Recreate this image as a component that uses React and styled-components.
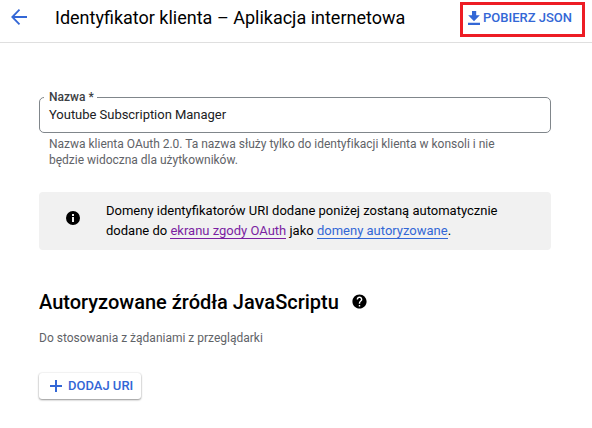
import React from "react";
import styled, { createGlobalStyle } from "styled-components";

const GlobalStyle = createGlobalStyle`
  * { box-sizing: border-box; }
  body {
    margin: 0;
    background: #fff;
    color: #000;
    font-family: Roboto, "Liberation Sans", sans-serif;
    overflow: hidden;
  }
`;

const Page = styled.div`
  width: 592px;
  height: 428px;
  overflow: hidden;
`;

const Header = styled.header`
  display: flex;
  align-items: flex-start;
  height: 43px;
  border-bottom: 1px solid #dfdfdf;
`;

const BackButton = styled.button`
  display: flex;
  margin: 7px 0 0 9px;
  padding: 0;
  border: 0;
  background: none;
  color: #3367d6;
`;

const Title = styled.h1`
  flex: none;
  width: 405px;
  margin: 7px 0 0 26px;
  font-size: 18px;
  font-weight: 400;
  line-height: 22px;
  white-space: nowrap;
`;

const DownloadButton = styled.button`
  display: flex;
  align-items: center;
  flex: none;
  width: 125px;
  height: 35px;
  margin: 2px 0 0;
  padding: 0 0 3px 3px;
  border: 3px solid #ed1c24;
  background: none;
  color: #3367d6;
  font: 500 13px/16px Roboto, sans-serif;
  white-space: nowrap;
`;

const Content = styled.main`
  display: flex;
  flex-direction: column;
  align-items: flex-start;
  width: 512px;
  margin: 48px 0 0 39px;
`;

const Field = styled.fieldset`
  width: 512px;
  height: 42px;
  margin: 0;
  padding: 0 9px;
  border: 1px solid #80868b;
  border-radius: 5px;
`;

const FieldLabel = styled.legend`
  height: 13px;
  margin-left: -5px;
  padding: 0 3px 0 5px;
  color: #3c4043;
  font-size: 12px;
  font-weight: 500;
  line-height: 13px;
`;

const FieldValue = styled.div`
  margin-top: 3px;
  color: #202124;
  font-size: 13px;
  line-height: 16px;
  letter-spacing: -0.03px;
  white-space: nowrap;
`;

const Hint = styled.p`
  margin: 3px 0 0 10px;
  color: #5f6368;
  font-size: 12px;
  line-height: 16px;
  letter-spacing: -0.01px;
  white-space: nowrap;
`;

const Notice = styled.aside`
  display: flex;
  align-items: center;
  width: 512px;
  height: 58px;
  margin-top: 24px;
  padding-left: 26px;
  border-radius: 4px;
  background: #f1f1f1;
`;

const NoticeIcon = styled.span`
  display: flex;
  width: 41px;
  margin-top: -6px;
`;

const NoticeText = styled.p`
  margin: 0;
  font-size: 13px;
  line-height: 20px;
  white-space: nowrap;
`;

const Link = styled.a`
  border-bottom: 1px solid;
  color: ${(p) => (p.$visited ? "#7b1fa2" : "#3367d6")};
  text-decoration: none;
`;

const SectionHeading = styled.div`
  display: flex;
  align-items: center;
  height: 26px;
  margin-top: 39px;
`;

const SectionTitle = styled.h2`
  width: 312px;
  margin: 0;
  font-size: 20px;
  font-weight: 500;
  line-height: 26px;
  white-space: nowrap;
`;

const HelpIcon = styled.span`
  display: flex;
  margin-bottom: 2px;
`;

const SectionHint = styled.p`
  margin: 15px 0 0;
  color: #5f6368;
  font-size: 12px;
  line-height: 16px;
  white-space: nowrap;
`;

const AddButton = styled.button`
  display: flex;
  align-items: center;
  width: 102px;
  height: 26px;
  margin-top: 27px;
  padding: 0 0 0 8px;
  border: 0;
  border-radius: 3px;
  background: #fff;
  box-shadow: 0 1px 2px rgba(0, 0, 0, 0.4), 0 0 2px rgba(0, 0, 0, 0.12);
  color: #3367d6;
  font: 500 13px/16px Roboto, sans-serif;
  white-space: nowrap;
`;

const Icon = styled.svg`
  display: block;
  flex: none;
  width: ${(p) => p.$size}px;
  height: ${(p) => p.$size}px;
  margin-right: ${(p) => p.$gap || 0}px;
  fill: currentColor;
`;

export default function App() {
  return (
    <>
      <GlobalStyle />
      <Page>
        <Header>
          <BackButton aria-label="Wstecz">
            <Icon $size={20} viewBox="0 0 20 20">
              <path
                d="M10.5 2.7 3.3 10l7.2 7.3M3.3 10H18"
                fill="none"
                stroke="currentColor"
                strokeWidth="1.8"
              />
            </Icon>
          </BackButton>
          <Title>Identyfikator klienta – Aplikacja internetowa</Title>
          <DownloadButton>
            <Icon $size={16} $gap={1} viewBox="0 0 16 16">
              <path d="M6 1h4.2v4.3h3.6L8 11.3l-5.8-6H6zM2 12.7h12V15H2z" />
            </Icon>
            POBIERZ JSON
          </DownloadButton>
        </Header>
        <Content>
          <Field>
            <FieldLabel>Nazwa *</FieldLabel>
            <FieldValue>Youtube Subscription Manager</FieldValue>
          </Field>
          <Hint>
            Nazwa klienta OAuth 2.0. Ta nazwa służy tylko do identyfikacji klienta w konsoli i nie
            <br />
            będzie widoczna dla użytkowników.
          </Hint>
          <Notice>
            <NoticeIcon>
              <Icon $size={16} viewBox="0 0 16 16">
                <path
                  fillRule="evenodd"
                  d="M8 1a7 7 0 1 0 0 14A7 7 0 0 0 8 1zM7 4h2v2H7zm0 3h2v5H7z"
                />
              </Icon>
            </NoticeIcon>
            <NoticeText>
              Domeny identyfikatorów URI dodane poniżej zostaną automatycznie
              <br />
              dodane do <Link $visited>ekranu zgody OAuth</Link> jako{" "}
              <Link>domeny autoryzowane</Link>.
            </NoticeText>
          </Notice>
          <SectionHeading>
            <SectionTitle>Autoryzowane źródła JavaScriptu</SectionTitle>
            <HelpIcon>
              <Icon $size={17} viewBox="0 0 24 24">
                <path d="M12 2C6.48 2 2 6.48 2 12s4.48 10 10 10 10-4.48 10-10S17.52 2 12 2zm1 17h-2v-2h2v2zm2.07-7.75-.9.92C13.45 12.9 13 13.5 13 15h-2v-.5c0-1.1.45-2.1 1.17-2.83l1.24-1.26c.37-.36.59-.86.59-1.41 0-1.1-.9-2-2-2s-2 .9-2 2H8c0-2.21 1.79-4 4-4s4 1.79 4 4c0 .88-.36 1.68-.93 2.25z" />
              </Icon>
            </HelpIcon>
          </SectionHeading>
          <SectionHint>Do stosowania z żądaniami z przeglądarki</SectionHint>
          <AddButton>
            <Icon $size={18} $gap={3} viewBox="0 0 18 18">
              <path d="M8 3h2v5h5v2h-5v5H8v-5H3V8h5z" />
            </Icon>
            DODAJ URI
          </AddButton>
        </Content>
      </Page>
    </>
  );
}
